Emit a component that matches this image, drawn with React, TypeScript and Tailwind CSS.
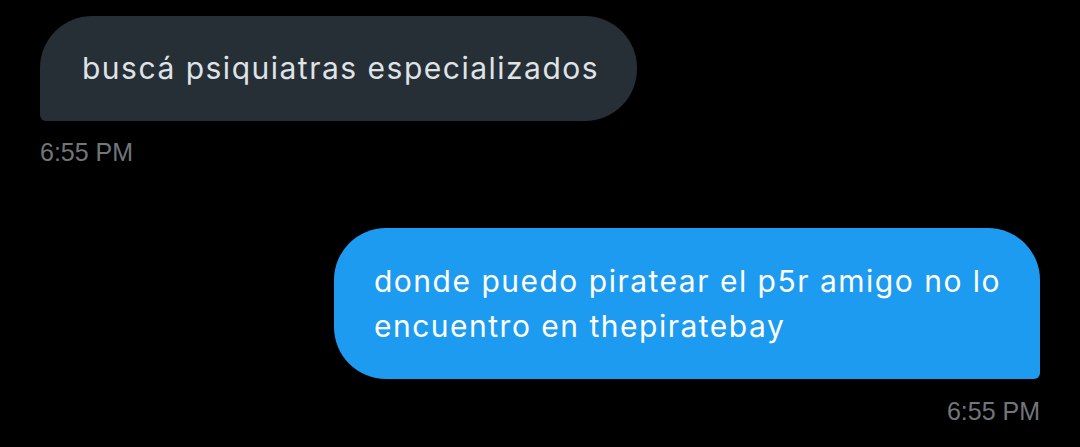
export default function App() {
  return (
    <div className="w-[1080px] h-[447px] bg-black overflow-hidden px-10 pt-4 flex flex-col">
      {/* received */}
      <div className="flex flex-col items-start">
        <div className="h-[105px] w-[597px] bg-[#262e36] rounded-[52px] rounded-bl-[6px] flex items-center pl-[42px] text-[30px] tracking-[1.5px] text-[#dfe3e6] font-['Inter',sans-serif]">
          buscá psiquiatras especializados
        </div>
        <div className="mt-[16px] text-[25px] leading-[30px] text-[#71767b] font-['Liberation_Sans',sans-serif]">6:55 PM</div>
      </div>

      {/* sent */}
      <div className="flex flex-col items-end mt-[61px]">
        <div className="w-[706px] h-[151px] bg-[#1d9bf0] rounded-[52px] rounded-br-[6px] flex flex-col justify-center pl-[40px] text-[30px] tracking-[1.5px] leading-[45px] text-white font-['Inter',sans-serif]">
          <span>donde puedo piratear el p5r amigo no lo</span>
          <span>encuentro en thepiratebay</span>
        </div>
        <div className="mt-[17px] text-[25px] leading-[30px] text-[#71767b] font-['Liberation_Sans',sans-serif]">6:55 PM</div>
      </div>
    </div>
  )
}
